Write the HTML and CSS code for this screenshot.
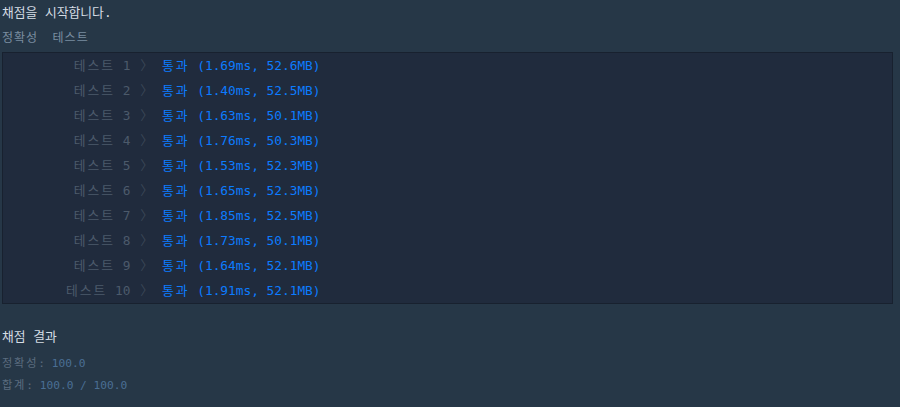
FILE: index.html
```html
<!DOCTYPE html>
<html lang="ko">
<head>
<meta charset="utf-8">
<title>채점 결과</title>
<link rel="stylesheet" href="styles.css">
</head>
<body>
<div class="console">
  <p class="msg">채점을 시작합니다.</p>
  <p class="heading"><span class="ko">정확성</span>&nbsp;&nbsp;<span class="ko">테스트</span></p>
  <table class="group">
    <tr><td class="label"><span class="ko">테스트</span> 1 <span class="chev">〉</span></td><td class="result"><span class="ko">통과</span> (1.69ms, 52.6MB)</td></tr>
    <tr><td class="label"><span class="ko">테스트</span> 2 <span class="chev">〉</span></td><td class="result"><span class="ko">통과</span> (1.40ms, 52.5MB)</td></tr>
    <tr><td class="label"><span class="ko">테스트</span> 3 <span class="chev">〉</span></td><td class="result"><span class="ko">통과</span> (1.63ms, 50.1MB)</td></tr>
    <tr><td class="label"><span class="ko">테스트</span> 4 <span class="chev">〉</span></td><td class="result"><span class="ko">통과</span> (1.76ms, 50.3MB)</td></tr>
    <tr><td class="label"><span class="ko">테스트</span> 5 <span class="chev">〉</span></td><td class="result"><span class="ko">통과</span> (1.53ms, 52.3MB)</td></tr>
    <tr><td class="label"><span class="ko">테스트</span> 6 <span class="chev">〉</span></td><td class="result"><span class="ko">통과</span> (1.65ms, 52.3MB)</td></tr>
    <tr><td class="label"><span class="ko">테스트</span> 7 <span class="chev">〉</span></td><td class="result"><span class="ko">통과</span> (1.85ms, 52.5MB)</td></tr>
    <tr><td class="label"><span class="ko">테스트</span> 8 <span class="chev">〉</span></td><td class="result"><span class="ko">통과</span> (1.73ms, 50.1MB)</td></tr>
    <tr><td class="label"><span class="ko">테스트</span> 9 <span class="chev">〉</span></td><td class="result"><span class="ko">통과</span> (1.64ms, 52.1MB)</td></tr>
    <tr><td class="label"><span class="ko">테스트</span> 10 <span class="chev">〉</span></td><td class="result"><span class="ko">통과</span> (1.91ms, 52.1MB)</td></tr>
  </table>
  <p class="title">채점 결과</p>
  <p class="score first"><span class="key"><span class="ko">정확성</span>:</span> <span class="val">100.0</span></p>
  <p class="score"><span class="key"><span class="ko">합계</span>:</span> <span class="val">100.0 / 100.0</span></p>
</div>
</body>
</html>
```
FILE: styles.css
```css
html, body {
  margin: 0;
  padding: 0;
  background: #263747;
}
.console {
  padding: 0 7px 0 2px;
  font-family: "DejaVu Sans Mono", "Noto Sans CJK KR", monospace;
  font-size: 12.8px;
  color: #d8dee6;
}
.msg {
  margin: 0;
  height: 25px;
  line-height: 25px;
  color: #d5dce4;
}
.heading {
  margin: 0;
  height: 27px;
  line-height: 27px;
  color: #7a8da0;
  font-size: 12px;
}
.heading .ko {
  letter-spacing: 1px;
}
.group {
  width: 100%;
  border-collapse: collapse;
  background: #202b3d;
  border: 1px solid #18212f;
}
.group td {
  height: 25px;
  padding: 0;
  line-height: 25px;
  white-space: pre;
}
.group .ko {
  letter-spacing: 2px;
}
.label {
  width: 150px;
  text-align: right;
  color: #4c5a6b;
}
.chev {
  color: #3b4757;
  margin-left: 2px;
}
.result {
  padding-left: 9px !important;
  color: #0c7cff;
}
.title {
  margin: 20px 0 4px;
  height: 25px;
  line-height: 25px;
  color: #d5dce4;
}
.score {
  margin: 0;
  height: 22px;
  line-height: 22px;
  font-size: 11.2px;
}
.score .ko {
  letter-spacing: 1.8px;
}
.key {
  color: #5b6c7f;
}
.val {
  color: #4a6e93;
}
```
